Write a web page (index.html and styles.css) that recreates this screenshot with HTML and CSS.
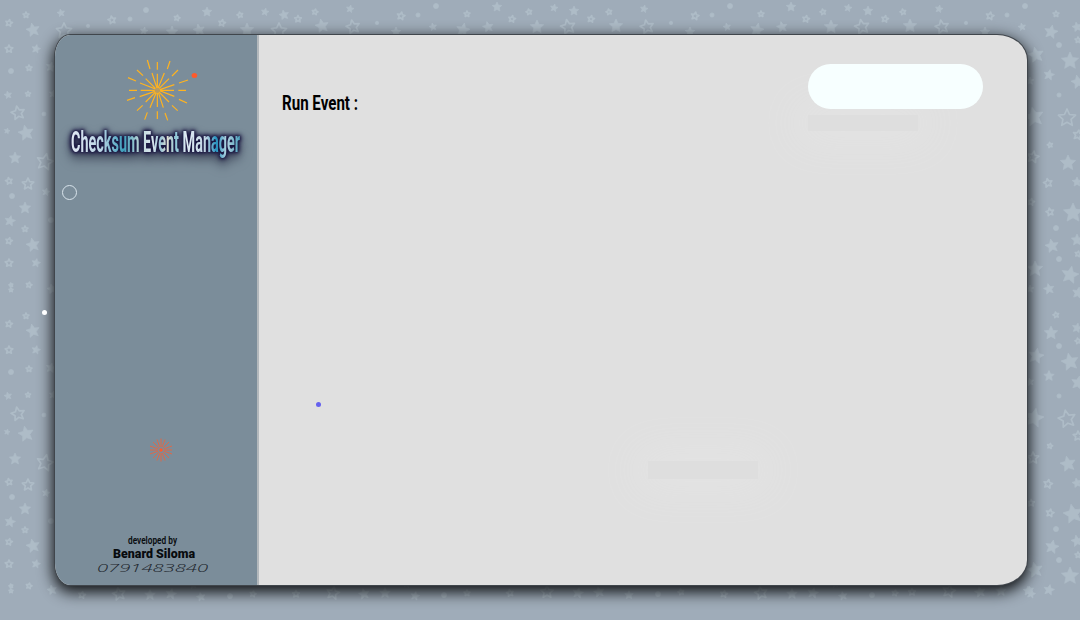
FILE: index.html
```
<!DOCTYPE html>
<html lang="en">
<head>
<meta charset="utf-8">
<title>Checksum Event Manager</title>
<link rel="stylesheet" href="styles.css">
</head>
<body>
<svg class="sky" id="sky" width="1080" height="620" aria-hidden="true"></svg>
<div class="window">
  <aside class="sidebar">
    <svg class="burst" width="202" height="90" viewBox="55 35 202 90">
      <g transform="scale(.33333)" stroke="#ffb31f" stroke-width="3.6">
        <path d="M472 186V209M442 180l8 27M510 183l-8 24M534 210l-18 18M564 240l-27 9M558 271h-23M561 309l-24-11M533 332l-17-16M503 361l-8-22M472 357v-23M434 359l8-22M411 332l17-16M381 301l24-8M387 271h24M384 233l24 10M411 210l18 17"/>
        <path d="M472 221V321M422 271H522M456 219L490 323M493 219L450 323M437 236L507 306M507 236L437 306M420 249L523 289M523 254L419 290"/>
        <circle cx="472" cy="271" r="8" fill="#b69b62" stroke="none"/>
      </g>
      <ellipse cx="194.4" cy="75.4" rx="2.8" ry="2.5" fill="#ff5a2b"/>
    </svg>
    <svg class="brand" width="202" height="45" viewBox="55 125 202 45">
      <defs>
        <linearGradient id="ice" gradientUnits="userSpaceOnUse" x1="71" y1="0" x2="240" y2="0">
          <stop offset="0" stop-color="#e0e7f3"/><stop offset=".18" stop-color="#b9d4e4"/>
          <stop offset=".31" stop-color="#3c9dbb"/><stop offset=".4" stop-color="#b5d2d5"/>
          <stop offset=".48" stop-color="#dce8f0"/><stop offset=".53" stop-color="#98c3d6"/>
          <stop offset=".57" stop-color="#e0ded2"/><stop offset=".62" stop-color="#8cc6d6"/>
          <stop offset=".68" stop-color="#e2edf6"/><stop offset=".8" stop-color="#bed3e2"/>
          <stop offset=".86" stop-color="#2492bf"/><stop offset=".92" stop-color="#b6d4e0"/>
          <stop offset="1" stop-color="#4aa0bd"/>
        </linearGradient>
      </defs>
      <text x="71" y="151.8" textLength="169" lengthAdjust="spacingAndGlyphs" fill="url(#ice)">Checksum Event Manager</text>
    </svg>
    <span class="ring"></span>
    <svg class="spark" width="24" height="24" viewBox="-12 -12 24 24">
      <path d="M0 -3V-11.5M0 3V11.5M-3 0H-11M3 0H11M-1.2 -3L-4 -10.5M1.2 -3L4 -10.5M-1.2 3L-4 10.5M1.2 3L4 10.5M-2.2 -2.2L-8 -8M2.2 -2.2L8 -8M-2.2 2.2L-8 8M2.2 2.2L8 8M-3 -1.2L-11 -4M3 -1.2L11 -4M-3 1.2L-11 4M3 1.2L11 4"/>
      <circle r="1.8"/>
    </svg>
    <svg class="credit" width="202" height="50" viewBox="55 535 202 50">
      <text class="by" x="128" y="544" textLength="49" lengthAdjust="spacingAndGlyphs">developed by</text>
      <text class="name" x="113" y="558" textLength="82" lengthAdjust="spacingAndGlyphs">Benard Siloma</text>
      <text class="phone" x="97" y="572" textLength="111" lengthAdjust="spacingAndGlyphs">0791483840</text>
    </svg>
  </aside>
  <main class="content">
    <svg class="heading" width="120" height="30" viewBox="0 0 120 30">
      <text x="2" y="18" textLength="76" lengthAdjust="spacingAndGlyphs">Run Event :</text>
    </svg>
    <div class="status">
      <div class="pill"></div>
      <div class="ghost"></div>
    </div>
    <div class="ghost ghost-low"></div>
  </main>
</div>
<span class="dot dot-white"></span>
<span class="dot dot-blue"></span>
<script src="stars.js"></script>
</body>
</html>
```
FILE: styles.css
```
html, body { height: 100%; }
body {
  margin: 0;
  box-sizing: border-box;
  padding: 35px 53px 35px 55px;
  background: #9facb9;
  overflow: hidden;
  font-family: Roboto, "Liberation Sans", sans-serif;
}
.sky { position: absolute; left: 0; top: 0; z-index: -1; }
.sky .solid { fill: #aebcc7; stroke: #aebcc7; stroke-width: .7; stroke-linejoin: round; }
.sky .hollow { fill: none; stroke: #aebcc7; stroke-width: 1.7; stroke-linejoin: round; }
.window {
  display: flex;
  width: 972px;
  height: 550px;
  border-radius: 15px 30px 30px 15px / 22px 25px 25px 22px;
  background: #e0e0e0;
  box-shadow: 0 0 0 1px #40464c, 0 5px 15px 2px #0d0f11;
}
.sidebar {
  display: flex;
  flex-direction: column;
  width: 202px;
  border-right: 2px solid #b3b8bc;
  border-radius: 15px 0 0 15px / 22px 0 0 22px;
  background: #7b8d9a;
}
.burst, .brand, .spark, .credit, .heading { display: block; }
.brand { overflow: visible; }
.brand text {
  font-size: 30px;
  font-weight: 700;
  filter: drop-shadow(0 0 1px #1b1842) drop-shadow(0 0 2px #1b1842) drop-shadow(0 0 2px #1b1842) drop-shadow(0 6px 5px #4b5667);
}
.ring {
  width: 13px;
  height: 13px;
  margin: 15px 0 0 7px;
  border: 1px solid #d9e4ec;
  border-radius: 50%;
}
.spark { margin: 238px 0 0 94px; stroke: #e9643f; stroke-width: .9; }
.spark circle { fill: #ff5a2b; stroke: none; }
.credit { margin-top: auto; fill: #080b0e; }
.by { font-size: 10px; font-weight: 600; }
.name { font-size: 12.5px; font-weight: 900; }
.phone { font-family: "Open Sans", sans-serif; font-size: 11.5px; font-weight: 300; font-style: italic; fill: #1b242b; }
.content {
  flex: 1;
  display: grid;
  grid-template-columns: 1fr 175px;
  grid-template-rows: 397px 18px;
  padding: 29px 44px 0 21px;
}
.heading { margin-top: 28px; font-size: 20.5px; font-weight: 700; }
.pill { height: 45px; border-radius: 23px; background: #f7ffff; position: relative; z-index: 1; }
.ghost { width: 110px; height: 16px; margin-top: 6px; background: #dedede; box-shadow: 0 0 40px 8px #e4e4e4; }
.ghost-low { height: 18px; margin: 0 0 0 368px; }
.dot { position: absolute; width: 5px; height: 5px; border-radius: 50%; }
.dot-white { left: 42px; top: 310px; background: #fff; }
.dot-blue { left: 316px; top: 402px; background: #6561ee; }
```
FILE: stars.js
```
// Each star: x, y, radius, kind (s = solid, h = hollow, d = dot)
const topStart = [
  [61,13,4,'s'],[64,31,8,'h'],[88,26,2,'d'],[112,20,4,'h'],[130,19,2.5,'d'],[144,31,4,'s'],[146,10,3,'d'],
  [172,32,6,'s'],[177,18,3,'h'],[199,30,6,'s'],[207,12,5,'s'],[222,23,3.5,'h'],[240,15,3,'h'],[247,30,7,'s'],
  [265,12,4,'s'],[284,15,5,'s'],[298,19,3.5,'h'],[315,12,3,'h'],[322,26,7,'s'],[279,31,8,'h']
];
const topTile = [
  [350,9,4,'s'],[353,27,7,'h'],[377,23,2,'d'],[401,16,4,'h'],[418,15,2.5,'d'],[396,32,5,'s'],[436,6,3,'d'],
  [433,27,4,'s'],[467,14,3,'h'],[463,30,7,'s'],[488,27,5.5,'s'],[497,7,5,'s'],[512,19,3.5,'h'],[529,12,3,'h'],
  [537,27,7,'s'],[554,8,4,'s'],[568,27,7.5,'h'],[574,11,5,'s'],[591,19,3.5,'h'],[609,12,3,'h'],[616,26,7,'s']
];
const leftTile = [
  [26,15,3,'h'],[9,23,3.5,'h'],[33,30,7,'s'],[9,49,4,'h'],[36,49,4.5,'s'],[11,71,3,'d'],[29,68,3,'h'],[51,67,5,'s'],
  [8,95,4,'s'],[28,94,2.6,'h'],[53,94,4,'s'],[18,113,7,'h'],[44,114,2.3,'d'],[7,131,3,'s'],[26,133,8,'s'],
  [15,158,6,'s'],[45,162,8.5,'h'],[9,181,3.5,'h'],[28,184,6,'h'],[46,192,4,'s'],[12,196,3,'d'],[25,208,6,'s'],
  [10,221,5.5,'s'],[51,220,3,'d'],[25,229,3,'h'],[9,241,3.4,'h'],[33,245,7,'s'],[9,263,4,'h'],[36,263,4.5,'s'],
  [11,285,2,'h'],[11,290,2,'h'],[29,285,3,'h'],[52,289,5,'s']
];
const rightTile = [
  [1056,14,3,'h'],[1051,32,7,'s'],[1077,27,5,'s'],[1078,40,3,'h'],[1059,45,3,'d'],[1036,55,8,'s'],[1070,61,9,'s'],
  [1049,75,5.5,'s'],[1078,82,7,'s'],[1030,81,4,'s'],[1059,95,2.5,'d'],[1034,117,10,'s'],[1067,118,9,'h'],
  [1078,135,5,'h'],[1050,145,2.7,'h'],[1068,163,8,'s'],[1033,157,6,'h'],[1048,183,4.5,'h'],[1077,182,5,'s'],
  [1031,202,3.5,'h'],[1050,212,4,'h'],[1073,213,10,'s'],[1056,228,3,'d'],[1052,246,7,'s'],[1077,240,6,'s'],
  [1078,254,3,'h'],[1059,259,3,'d'],[1035,269,8,'s'],[1070,275,9,'s'],[1049,289,5.5,'s'],[1030,289,4,'s'],[1078,293,6,'s']
];
const bottomTile = [
  [82,595,3.5,'h'],[119,594,6.5,'h'],[150,595,5.5,'s'],[171,594,5.5,'s'],[201,597,4.5,'s'],[230,596,3,'d'],[253,594,3,'h'],[193,585,4,'s']
];
const shift = (list, dx, dy) => list.map(([x, y, r, k]) => [x + dx, y + dy, r, k]);
const stars = [
  ...topStart, ...topTile, ...shift(topTile, 294, 0), ...shift(topTile.filter(s => s[0] < 440), 589, 0),
  ...leftTile, ...shift(leftTile, 0, 301), ...rightTile,
  ...shift(rightTile.filter(s => s[1] < 291), 0, 301), [1028,591,5,'s'],
  ...bottomTile, ...shift(bottomTile, 214, -1), ...shift(bottomTile, 428, -2),
  ...shift(bottomTile, 642, -1), ...shift(bottomTile.slice(0, 5), 830, -3)
];
const points = (x, y, r, i) => Array.from({ length: 10 }, (_, n) => {
  const a = Math.PI * n / 5 - Math.PI / 2 + (i % 3 - 1) * 0.2;
  const q = n % 2 ? r * 0.48 : r;
  return (x + q * Math.cos(a)).toFixed(1) + ',' + (y + q * Math.sin(a)).toFixed(1);
}).join(' ');
document.getElementById('sky').innerHTML = stars.map(([x, y, r, k], i) => k === 'd'
  ? `<circle class="solid" cx="${x}" cy="${y}" r="${r * 0.85}"/>`
  : `<polygon class="${k === 'h' ? 'hollow' : 'solid'}" points="${points(x, y, r, i)}"/>`).join('');
```
